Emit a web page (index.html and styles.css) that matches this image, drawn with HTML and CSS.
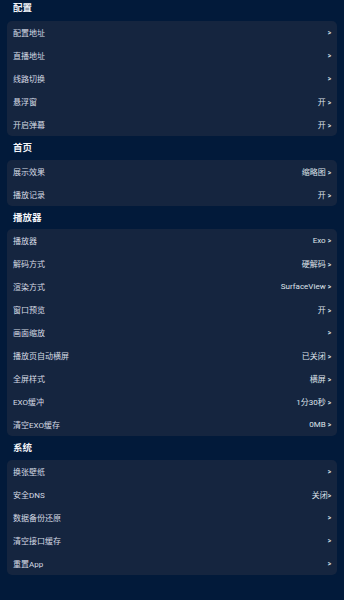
FILE: index.html
```html
<!DOCTYPE html>
<html lang="zh-CN">
<head>
<meta charset="utf-8">
<link rel="stylesheet" href="styles.css">
</head>
<body>
<div class="page">
  <section class="section">
    <div class="section-title first">配置</div>
    <div class="card">
      <div class="row"><span class="label">配置地址</span><span class="value"><span class="chev">&gt;</span></span></div>
      <div class="row"><span class="label">直播地址</span><span class="value"><span class="chev">&gt;</span></span></div>
      <div class="row"><span class="label">线路切换</span><span class="value"><span class="chev">&gt;</span></span></div>
      <div class="row"><span class="label">悬浮窗</span><span class="value">开 <span class="chev">&gt;</span></span></div>
      <div class="row"><span class="label">开启弹幕</span><span class="value">开 <span class="chev">&gt;</span></span></div>
    </div>
  </section>
  <section class="section">
    <div class="section-title">首页</div>
    <div class="card">
      <div class="row"><span class="label">展示效果</span><span class="value">缩略图 <span class="chev">&gt;</span></span></div>
      <div class="row"><span class="label">播放记录</span><span class="value">开 <span class="chev">&gt;</span></span></div>
    </div>
  </section>
  <section class="section">
    <div class="section-title">播放器</div>
    <div class="card">
      <div class="row"><span class="label">播放器</span><span class="value">Exo <span class="chev">&gt;</span></span></div>
      <div class="row"><span class="label">解码方式</span><span class="value">硬解码 <span class="chev">&gt;</span></span></div>
      <div class="row"><span class="label">渲染方式</span><span class="value">SurfaceView <span class="chev">&gt;</span></span></div>
      <div class="row"><span class="label">窗口预览</span><span class="value">开 <span class="chev">&gt;</span></span></div>
      <div class="row"><span class="label">画面缩放</span><span class="value"><span class="chev">&gt;</span></span></div>
      <div class="row"><span class="label">播放页自动横屏</span><span class="value">已关闭 <span class="chev">&gt;</span></span></div>
      <div class="row"><span class="label">全屏样式</span><span class="value">横屏 <span class="chev">&gt;</span></span></div>
      <div class="row"><span class="label">EXO缓冲</span><span class="value">1分30秒 <span class="chev">&gt;</span></span></div>
      <div class="row"><span class="label">清空EXO缓存</span><span class="value">0MB <span class="chev">&gt;</span></span></div>
    </div>
  </section>
  <section class="section">
    <div class="section-title">系统</div>
    <div class="card">
      <div class="row"><span class="label">换张壁纸</span><span class="value"><span class="chev">&gt;</span></span></div>
      <div class="row"><span class="label">安全DNS</span><span class="value">关闭<span class="chev">&gt;</span></span></div>
      <div class="row"><span class="label">数据备份还原</span><span class="value"><span class="chev">&gt;</span></span></div>
      <div class="row"><span class="label">清空接口缓存</span><span class="value"><span class="chev">&gt;</span></span></div>
      <div class="row"><span class="label">重置App</span><span class="value"><span class="chev">&gt;</span></span></div>
    </div>
  </section>
</div>
</body>
</html>
```
FILE: styles.css
```css
html, body {
  margin: 0;
  padding: 0;
  background: #021a3a;
  height: 100%;
}
body {
  font-family: Roboto, "Noto Sans CJK SC", sans-serif;
  color: #dde2ea;
  overflow: hidden;
}
.page {
  padding: 0 7px;
}
.section-title {
  height: 23.5px;
  line-height: 23.5px;
  padding-left: 6px;
  font-size: 9.5px;
  font-weight: 700;
  color: #f2f4f8;
}
.section-title.first {
  height: 21px;
  line-height: 15px;
}
.card {
  background: #15253f;
  border-radius: 5px;
}
.row {
  height: 23px;
  display: flex;
  align-items: center;
  justify-content: space-between;
  padding: 0 6px;
  font-size: 8px;
}
.label {
  color: #d6dbe4;
}
.value {
  color: #dfe3ea;
  font-size: 8px;
}
.chev {
  font-size: 6.5px;
  font-weight: 700;
}
```
